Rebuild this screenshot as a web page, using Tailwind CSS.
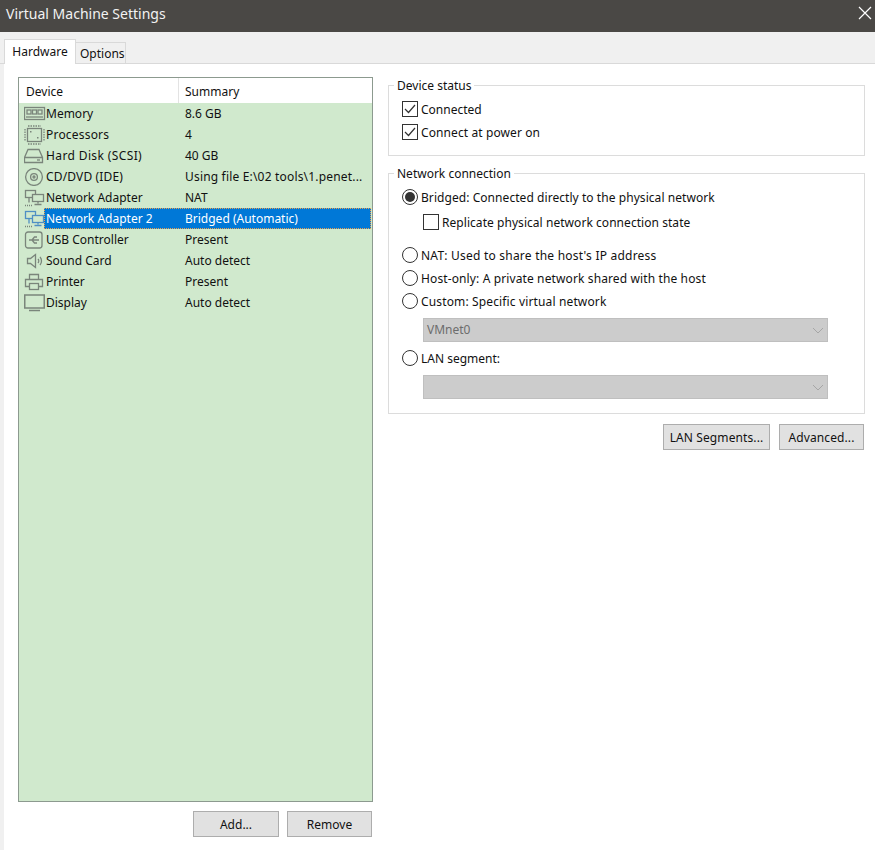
<!DOCTYPE html>
<html lang="en">
<head>
<meta charset="UTF-8">
<title>Virtual Machine Settings</title>
<script src="https://cdn.jsdelivr.net/npm/@tailwindcss/browser@4"></script>
</head>
<body class="bg-white font-['Noto_Sans',sans-serif] text-[12px] text-[#111] overflow-hidden">
<div class="w-[875px] h-[850px] flex flex-col">
  <!-- title bar -->
  <div class="h-[32px] bg-[#4a4845] flex items-center justify-between pl-[6px] pr-[3px] pb-[6px] text-[14px] text-[#f2f2f2]">
    <span>Virtual Machine Settings</span>
    <svg width="14" height="14" viewBox="0 0 14 14"><path d="M1 1L13 13M13 1L1 13" stroke="#fff" stroke-width="1.2" fill="none"/></svg>
  </div>
  <!-- tabs -->
  <div class="h-[32px] bg-[#f0f0f0] border-b border-[#d9d9d9] flex items-end pl-[4px]">
    <div class="w-[72px] h-[25px] bg-white border border-b-0 border-[#d9d9d9] -mb-px flex items-center justify-center">Hardware</div>
    <div class="w-[50px] h-[21px] bg-[#f0f0f0] border border-b-0 border-l-0 border-[#d9d9d9] flex items-center pl-[4px] pt-[2px]">Options</div>
  </div>
  <div class="flex-1 flex bg-white border-l-[4px] border-[#f0f0f0]">
    <!-- left column -->
    <div class="w-[369px] ml-[14px] mt-[13px] flex flex-col">
      <div class="w-[355px] h-[725px] border border-[#8c9a8f] bg-[#d0e9cd] flex flex-col">
        <div class="h-[25px] shrink-0 bg-white grid grid-cols-[160px_1fr] items-center">
          <div class="h-full border-r border-[#e3e3e3] pl-[7px] pt-[2px] flex items-center">Device</div>
          <div class="pl-[6px] pt-[2px]">Summary</div>
        </div>
        <!-- rows -->
        <div class="h-[21px] flex items-center">
          <svg width="22" height="16" viewBox="0 0 22 16" class="ml-[5px] shrink-0" fill="none" stroke="#7a857b" stroke-width="1.3"><rect x="0.5" y="1.5" width="20" height="12"/><rect x="3" y="4" width="4" height="4"/><rect x="8.5" y="4" width="4" height="4"/><rect x="14" y="4" width="4" height="4"/><path d="M2 11h17"/></svg>
          <span class="w-[139px] shrink-0">Memory</span><span>8.6 GB</span>
        </div>
        <div class="h-[21px] flex items-center">
          <svg width="22" height="20" viewBox="0 0 22 20" class="ml-[5px] shrink-0" fill="none" stroke="#7a857b" stroke-width="1.3"><rect x="3.5" y="3.5" width="14" height="13"/><path stroke-dasharray="1.5 1" d="M4 1h13M4 19h13M1 4v12M20 4v12"/><rect x="6" y="6" width="1.5" height="1.5" fill="#7a857b" stroke="none"/><rect x="13" y="12" width="1.5" height="1.5" fill="#7a857b" stroke="none"/></svg>
          <span class="w-[139px] shrink-0 tracking-[0.2px]">Processors</span><span>4</span>
        </div>
        <div class="h-[21px] flex items-center">
          <svg width="22" height="16" viewBox="0 0 22 16" class="ml-[5px] shrink-0" fill="none" stroke="#7a857b" stroke-width="1.3"><path d="M4 1.5h11l3.5 8v5h-18v-5zM0.5 9.5h18"/><path d="M13 12h3"/></svg>
          <span class="w-[139px] shrink-0 tracking-[0.38px]">Hard Disk (SCSI)</span><span>40 GB</span>
        </div>
        <div class="h-[21px] flex items-center">
          <svg width="22" height="18" viewBox="0 0 22 18" class="ml-[5px] shrink-0" fill="none" stroke="#7a857b" stroke-width="1.3"><circle cx="10" cy="9" r="8.4"/><circle cx="10" cy="9" r="3.4"/><circle cx="10" cy="9" r="1"/></svg>
          <span class="w-[139px] shrink-0 tracking-[0.15px]">CD/DVD (IDE)</span><span class="tracking-[0.18px]">Using file E:\02 tools\1.penet...</span>
        </div>
        <div class="h-[21px] flex items-center">
          <svg width="22" height="18" viewBox="0 0 22 18" class="ml-[5px] shrink-0" fill="none" stroke="#7a857b" stroke-width="1.3"><rect x="1.5" y="1.5" width="10" height="7"/><rect x="8.5" y="5.5" width="11" height="7" fill="#d0e9cd"/><path d="M14 12.5v2M10.5 15.5h7M5 8.5v5"/><path stroke-dasharray="1 1" d="M1 16.5h8"/></svg>
          <span class="w-[139px] shrink-0">Network Adapter</span><span>NAT</span>
        </div>
        <div class="h-[21px] flex items-center">
          <svg width="20" height="18" viewBox="0 0 20 18" class="ml-[5px] shrink-0" fill="none" stroke="#4f8fc4" stroke-width="1.3"><rect x="1.5" y="1.5" width="10" height="7"/><rect x="8.5" y="5.5" width="11" height="7" fill="#d0e9cd"/><path d="M14 12.5v2M10.5 15.5h7M5 8.5v5"/><path stroke="#7a857b" stroke-dasharray="1 1" d="M1 16.5h8"/></svg>
          <div class="flex-1 h-[21px] mr-px bg-[#0078d7] text-white border border-dotted border-[#e8a050] flex items-center">
            <span class="w-[140px] shrink-0 pl-px">Network Adapter 2</span><span>Bridged (Automatic)</span>
          </div>
        </div>
        <div class="h-[21px] flex items-center">
          <svg width="22" height="18" viewBox="0 0 22 18" class="ml-[5px] shrink-0" fill="none" stroke="#7a857b" stroke-width="1.3"><rect x="1.5" y="1" width="16.5" height="16" rx="2.5"/><path d="M5 9h10M8 9l2.5-3h2.5M8 9l2.5 3h2.5"/></svg>
          <span class="w-[139px] shrink-0">USB Controller</span><span>Present</span>
        </div>
        <div class="h-[21px] flex items-center">
          <svg width="22" height="16" viewBox="0 0 22 16" class="ml-[5px] shrink-0" fill="none" stroke="#7a857b" stroke-width="1.3"><path d="M3.5 5.5h3l5-4v13l-5-4h-3z"/><path d="M14 6c1 1 1 3 0 4M16 4c2 2 2 6 0 8"/></svg>
          <span class="w-[139px] shrink-0">Sound Card</span><span>Auto detect</span>
        </div>
        <div class="h-[21px] flex items-center">
          <svg width="22" height="18" viewBox="0 0 22 18" class="ml-[5px] shrink-0" fill="none" stroke="#7a857b" stroke-width="1.3"><path d="M5.5 6.5v-5h9v5M5.5 13.5h-4v-7h17v7h-4"/><rect x="5.5" y="10.5" width="9" height="6"/></svg>
          <span class="w-[139px] shrink-0">Printer</span><span>Present</span>
        </div>
        <div class="h-[21px] flex items-center">
          <svg width="22" height="18" viewBox="0 0 22 18" class="ml-[5px] shrink-0" fill="none" stroke="#7a857b" stroke-width="1.5"><rect x="0.75" y="1" width="19.5" height="13"/><path d="M5 16.5h11"/></svg>
          <span class="w-[139px] shrink-0">Display</span><span>Auto detect</span>
        </div>
      </div>
      <div class="w-[354px] flex justify-end gap-[8px] mt-[9px]">
        <button class="w-[86px] h-[26px] bg-[#e1e1e1] border border-[#adadad] pt-[2px]">Add...</button>
        <button class="w-[85px] h-[26px] bg-[#e1e1e1] border border-[#adadad] pt-[2px]">Remove</button>
      </div>
    </div>
    <!-- right column -->
    <div class="w-[477px] ml-[1px] mt-[21px]">
      <div class="relative h-[71px] border border-[#dcdcdc] pt-[15px] pl-[13px] flex flex-col gap-[7px]">
        <span class="absolute -top-[7px] left-[5px] bg-white px-[3px] leading-[14px]">Device status</span>
        <label class="flex items-center h-[16px] gap-[3px]"><span class="w-[16px] h-[16px] border border-[#333] flex items-center justify-center"><svg width="12" height="10" viewBox="0 0 12 10"><path d="M1 5l3.5 3.5L11 1" stroke="#333" stroke-width="1.2" fill="none"/></svg></span><span class="pt-[2px]">Connected</span></label>
        <label class="flex items-center h-[16px] gap-[3px]"><span class="w-[16px] h-[16px] border border-[#333] flex items-center justify-center"><svg width="12" height="10" viewBox="0 0 12 10"><path d="M1 5l3.5 3.5L11 1" stroke="#333" stroke-width="1.2" fill="none"/></svg></span><span class="pt-[2px] tracking-[0.1px]">Connect at power on</span></label>
      </div>
      <div class="relative h-[241px] mt-[17px] border border-[#dcdcdc] pt-[15px] pl-[13px] flex flex-col">
        <span class="absolute -top-[7px] left-[5px] bg-white px-[3px] leading-[14px]">Network connection</span>
        <label class="flex items-center h-[16px] gap-[3px]"><span class="w-[16px] h-[16px] rounded-full border border-[#333] flex items-center justify-center"><span class="w-[10px] h-[10px] rounded-full bg-[#333]"></span></span><span class="pt-[2px] tracking-[0.06px]">Bridged: Connected directly to the physical network</span></label>
        <label class="flex items-center h-[16px] gap-[3px] ml-[21px] mt-[9px]"><span class="w-[16px] h-[16px] border border-[#333]"></span><span class="pt-[2px] tracking-[0.05px]">Replicate physical network connection state</span></label>
        <label class="flex items-center h-[16px] gap-[3px] mt-[17px]"><span class="w-[16px] h-[16px] rounded-full border border-[#333]"></span><span class="pt-[2px] tracking-[0.22px]">NAT: Used to share the host's IP address</span></label>
        <label class="flex items-center h-[16px] gap-[3px] mt-[7px]"><span class="w-[16px] h-[16px] rounded-full border border-[#333]"></span><span class="pt-[2px] tracking-[0.12px]">Host-only: A private network shared with the host</span></label>
        <label class="flex items-center h-[16px] gap-[3px] mt-[7px]"><span class="w-[16px] h-[16px] rounded-full border border-[#333]"></span><span class="pt-[2px] tracking-[0.14px]">Custom: Specific virtual network</span></label>
        <div class="w-[405px] h-[24px] ml-[21px] mt-[9px] bg-[#cccccc] border border-[#bfbfbf] flex items-center justify-between pl-[3px] pr-[3px] text-[#6d6d6d]">VMnet0<svg width="12" height="7" viewBox="0 0 12 7"><path d="M1 1l5 5 5-5" stroke="#a6a6a6" fill="none"/></svg></div>
        <label class="flex items-center h-[16px] gap-[3px] mt-[8px]"><span class="w-[16px] h-[16px] rounded-full border border-[#333]"></span><span class="pt-[2px]">LAN segment:</span></label>
        <div class="w-[405px] h-[24px] ml-[21px] mt-[9px] bg-[#cccccc] border border-[#bfbfbf] flex items-center justify-end pr-[3px]"><svg width="12" height="7" viewBox="0 0 12 7"><path d="M1 1l5 5 5-5" stroke="#a6a6a6" fill="none"/></svg></div>
      </div>
      <div class="flex justify-end gap-[9px] mt-[10px] pr-px">
        <button class="w-[107px] h-[26px] bg-[#e1e1e1] border border-[#adadad] pt-[2px] tracking-[0.1px]">LAN Segments...</button>
        <button class="w-[85px] h-[26px] bg-[#e1e1e1] border border-[#adadad] pt-[2px] tracking-[0.1px]">Advanced...</button>
      </div>
    </div>
  </div>
</div>
</body>
</html>
